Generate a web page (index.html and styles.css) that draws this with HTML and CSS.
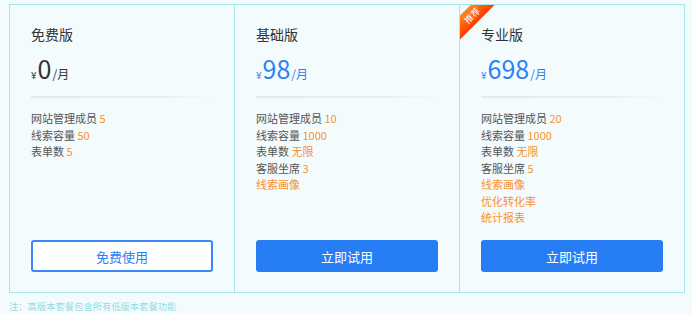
FILE: index.html
```html
<!DOCTYPE html>
<html lang="zh-CN">
<head>
<meta charset="utf-8">
<title>套餐价格</title>
<link rel="stylesheet" href="styles.css">
</head>
<body>
<div class="pricing">
  <div class="plans">
    <div class="plan">
      <div class="plan-name">免费版</div>
      <div class="price"><span class="yen">¥</span><span class="amount">0</span><span class="unit">/月</span></div>
      <div class="rule"></div>
      <ul class="features">
        <li>网站管理成员 <em>5</em></li>
        <li>线索容量 <em>50</em></li>
        <li>表单数 <em>5</em></li>
      </ul>
      <a class="btn btn-outline">免费使用</a>
    </div>
    <div class="plan">
      <div class="plan-name">基础版</div>
      <div class="price price-blue"><span class="yen">¥</span><span class="amount">98</span><span class="unit">/月</span></div>
      <div class="rule"></div>
      <ul class="features">
        <li>网站管理成员 <em>10</em></li>
        <li>线索容量 <em>1000</em></li>
        <li>表单数 <em>无限</em></li>
        <li>客服坐席 <em>3</em></li>
        <li class="hl">线索画像</li>
      </ul>
      <a class="btn btn-solid">立即试用</a>
    </div>
    <div class="plan plan-rec">
      <div class="ribbon"><span>推荐</span></div>
      <div class="plan-name">专业版</div>
      <div class="price price-blue"><span class="yen">¥</span><span class="amount">698</span><span class="unit">/月</span></div>
      <div class="rule"></div>
      <ul class="features">
        <li>网站管理成员 <em>20</em></li>
        <li>线索容量 <em>1000</em></li>
        <li>表单数 <em>无限</em></li>
        <li>客服坐席 <em>5</em></li>
        <li class="hl">线索画像</li>
        <li class="hl">优化转化率</li>
        <li class="hl">统计报表</li>
      </ul>
      <a class="btn btn-solid">立即试用</a>
    </div>
  </div>
  <p class="note">注：高版本套餐包含所有低版本套餐功能</p>
</div>
</body>
</html>
```

FILE: styles.css
```css
html, body {
  margin: 0;
  padding: 0;
  background: #f4fbfd;
}
body {
  font-family: "Noto Sans CJK SC", "Noto Sans", sans-serif;
  color: #444;
}
.pricing {
  padding: 4px 0 0 9px;
}
.plans {
  width: 676px;
  height: 289px;
  box-sizing: border-box;
  border: 1px solid #a6e7ec;
  display: grid;
  grid-template-columns: 224px 225px 225px;
  background: #f4fbfd;
}
.plan {
  position: relative;
  overflow: hidden;
  display: flex;
  flex-direction: column;
  padding: 19px 21px 20px 21px;
}
.plan + .plan {
  border-left: 1px solid #a6e7ec;
}
.plan-name {
  font-size: 14px;
  line-height: 20px;
  color: #333;
}
.price {
  margin-top: 9px;
  height: 30px;
  line-height: 30px;
  color: #333;
  white-space: nowrap;
}
.price .yen {
  font-size: 10px;
}
.price .amount {
  font-size: 25px;
  margin: 0 1px 0 1px;
}
.price .unit {
  font-size: 12px;
}
.price-blue {
  color: #2c82f4;
}
.rule {
  margin-top: 13px;
  height: 2px;
  background: linear-gradient(to right, #e4eaec 0%, #e9eff1 70%, rgba(233, 239, 241, 0) 100%);
}
.features {
  list-style: none;
  margin: 12px 0 0 0;
  padding: 0;
  font-size: 11px;
  line-height: 16.5px;
  color: #555;
}
.features em {
  font-style: normal;
  color: #f7922d;
}
.features .hl {
  color: #f7922d;
}
.btn {
  margin-top: auto;
  display: flex;
  align-items: center;
  justify-content: center;
  height: 32px;
  box-sizing: border-box;
  border-radius: 3px;
  font-size: 13px;
  cursor: pointer;
}
.btn-outline {
  background: #fff;
  border: 2px solid #3b87f6;
  color: #2d7ef2;
}
.btn-solid {
  background: #267df4;
  color: #fff;
}
.ribbon {
  position: absolute;
  left: -19px;
  top: 2px;
  width: 62px;
  height: 17px;
  transform: rotate(-45deg);
  background: linear-gradient(to top, #ff3a00, #f98a1f);
  display: flex;
  align-items: center;
  justify-content: center;
}
.ribbon span {
  color: #fff;
  font-size: 9px;
  line-height: 17px;
}
.note {
  margin: 6px 0 0 0;
  font-size: 9.3px;
  line-height: 14px;
  color: #98dbe2;
}
```
